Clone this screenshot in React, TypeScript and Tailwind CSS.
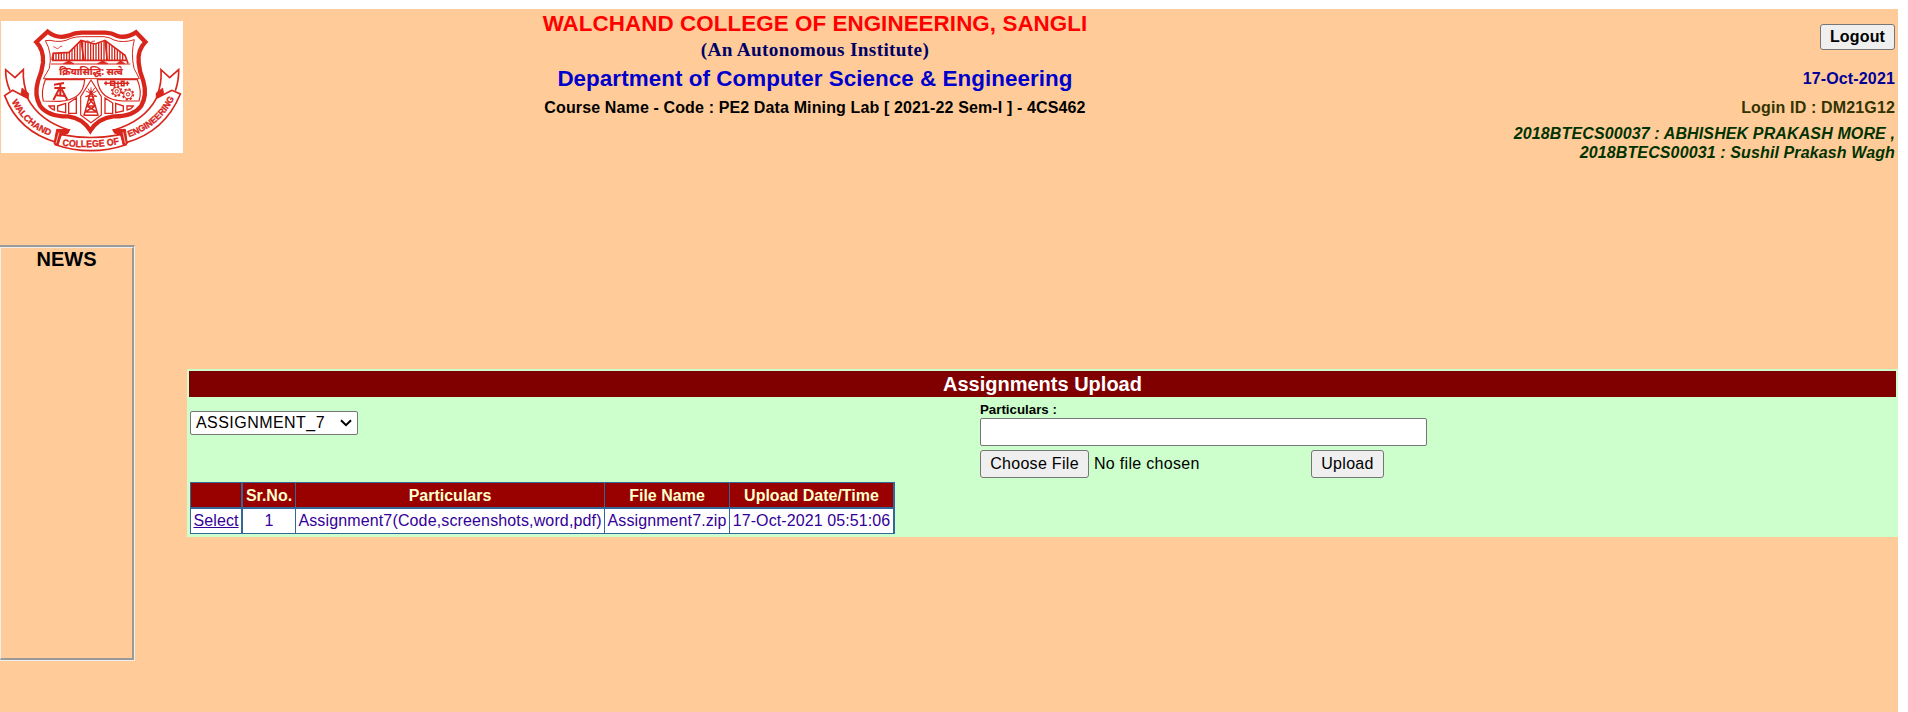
import React from "react";

const sans = "font-['Liberation_Sans',Arial,sans-serif]";

function Logo() {
  return (
    <svg viewBox="3 63 546 396" className="block h-[132px] w-[182px] bg-white" fill="none" stroke="#d9261c">
      {/* ribbon tails */}
      <path d="M30 272 Q16 240 17 209 L45 233 L70 209 Q68 252 84 290 M526 272 Q537 240 536 209 L509 233 L483 209 Q486 252 470 290" strokeWidth="5" />
      <path d="M66 264 L86 280 L85 298 L62 284 Z M488 264 L468 280 L469 298 L492 284 Z" fill="#d9261c" strokeWidth="2" />
      {/* shield */}
      <path
        d="M143 95 Q172 118 205 107 Q225 98 245 98 L316 98 Q336 99 350 107 Q378 117 408 97 L436 126 Q412 150 416 188 Q418 215 430 243 Q442 285 424 317 Q400 350 340 349 Q295 354 271 392 Q247 354 205 349 Q144 350 120 317 Q102 285 114 243 Q126 215 129 188 Q132 150 109 126 Z"
        strokeWidth="13"
        fill="#fff"
      />
      <path
        d="M150 121 Q185 130 212 115 Q228 110 245 110 L312 110 Q330 112 342 120 Q368 130 403 119 Q392 160 402 205 L418 236 H130 L148 205 Q158 160 136 122 Z M153 192 H391"
        strokeWidth="3"
      />
      {/* bridge and birds */}
      <path d="M156 180 L160 160 L207 157 L243 121 L285 132 L315 121 L375 166 L384 190 M156 181 H378 M243 121 L252 182 M315 121 L322 182" strokeWidth="5" />
      <path d="M160 158V182M168 158V182M176 158V182M184 158V182M192 158V182M200 158V182M208 155V182M216 148V182M224 141V182M232 133V182M240 126V182M248 124V182M256 126V182M264 128V182M272 130V182M280 132V182M288 132V182M296 129V182M304 127V182M312 124V182M320 126V182M328 132V182M336 138V182M344 144V182M352 150V182M360 156V182M368 162V182" strokeWidth="4" />
      <path d="M190 191 L207 182 L222 191 Z M292 191 L308 182 L324 191 Z M350 191 L362 182 L375 191Z" strokeWidth="2" fill="#d9261c" />
      <path d="M160 140 Q168 143 173 147 Q178 139 187 138 M260 122 Q267 123 271 128 Q276 123 285 123" strokeWidth="2.5" />
      <text x="273" y="226" textAnchor="middle" textLength="190" lengthAdjust="spacingAndGlyphs" fontSize="30" stroke="#d9261c" strokeWidth="0.6" fill="#d9261c" className="font-['Noto_Sans','Noto_Sans_Devanagari',sans-serif] font-bold">
        क्रियासिद्धि: सत्वे
      </text>
      {/* quadrants */}
      <path d="M136 239 H254 Q250 300 178 304 L130 303 Q122 275 136 239 Z M292 239 H412 Q427 275 417 303 L368 303 Q298 300 292 239 Z" strokeWidth="3.5" />
      {/* theodolite */}
      <path d="M162 254 L192 249 M163 264 H196 M181 252 V270 M177 268 L160 300 M185 268 L202 300 M181 270 V290 M170 286 L194 288" strokeWidth="6" />
      {/* circuit and gears */}
      <path d="M312 250 H388 M318 244 V256 M332 244 H344 V256 H332 Z M354 244 V257 M364 244 H372 V257 H364 Z M382 244 V257" strokeWidth="4.5" />
      <circle cx="350" cy="274" r="14.5" strokeWidth="5" strokeDasharray="6 5.4" />
      <circle cx="350" cy="274" r="12" strokeWidth="3" />
      <circle cx="350" cy="274" r="5" strokeWidth="3" />
      <circle cx="384" cy="283" r="16" strokeWidth="5" strokeDasharray="6.5 6" />
      <circle cx="384" cy="283" r="13" strokeWidth="3" />
      <circle cx="384" cy="283" r="5" strokeWidth="3" />
      {/* side windows */}
      <path d="M147 318 H163 V330 Q154 328 147 318 Z M173 318 L197 310 V338 L173 333 Z M206 309 L229 294 V340 H206 Z M315 294 L338 309 V340 H315 Z M347 310 L370 318 V333 L347 338 Z M381 318 H400 Q394 328 381 330 Z" strokeWidth="4" />
      {/* tower */}
      <path d="M273 240 L304 290 V345 L273 368 L242 345 V290 Z" strokeWidth="3.5" />
      <path d="M273 272 L252 346 M273 272 L294 346 M267 298 H280 M261 318 H286 M255 336 H291 M268 298 L286 318 L255 336 M279 298 L261 318 L291 336 M250 346 H296" strokeWidth="4.5" />
      <path d="M273 262 V284 M256 289 H291 M258 273 L290 289 M290 273 L257 291 M264 266 L282 296 M284 264 L265 294" strokeWidth="3" />
      {/* lettered ribbon */}
      <path d="M38 271 L83 295 Q118 362 207 390 L172 428 Q55 395 14 287 Z M516 271 L469 295 Q434 362 342 390 L378 428 Q495 395 541 282 Z" strokeWidth="5" fill="#fff" />
      <path d="M184 404 Q272 421 362 404 L378 434 Q272 470 166 434 Z" strokeWidth="5" fill="#fff" />
      <path d="M170 388 L209 389 L204 400 L184 404 L174 437 L162 431 Z M376 388 L338 389 L344 400 L362 404 L370 437 L382 431 Z" strokeWidth="3" fill="#d9261c" />
      <path d="M177 397 L168 430 M369 397 L376 430" strokeWidth="2" stroke="#fff" />
      <path id="ribbon-left" d="M35 304 Q72 380 154 409" stroke="none" />
      <path id="ribbon-mid" d="M187 437 Q272 448 362 432" stroke="none" />
      <path id="ribbon-right" d="M387 412 Q485 377 527 287" stroke="none" />
      <g fill="#d9261c" stroke="#d9261c" strokeWidth="1" className="font-['Liberation_Sans',Arial,sans-serif] font-bold">
        <text fontSize="27"><textPath href="#ribbon-left" textLength="158" lengthAdjust="spacingAndGlyphs">WALCHAND</textPath></text>
        <text fontSize="29"><textPath href="#ribbon-mid" textLength="172" lengthAdjust="spacingAndGlyphs">COLLEGE OF</textPath></text>
        <text fontSize="27"><textPath href="#ribbon-right" textLength="184" lengthAdjust="spacingAndGlyphs">ENGINEERING</textPath></text>
      </g>
    </svg>
  );
}

function Header() {
  return (
    <header className="flex h-[236px] font-bold">
      <div className="w-[187px] pt-3 pl-px">
        <Logo />
      </div>
      <div className="flex w-[1256px] flex-col items-center pt-0.5 whitespace-nowrap">
        <h1 className="text-[22.4px] leading-[26px] tracking-[0.06px] text-[#ff0000]">WALCHAND COLLEGE OF ENGINEERING, SANGLI</h1>
        <p className="font-['Liberation_Serif','Times_New_Roman',serif] text-[19.2px] leading-[25px] tracking-[0.35px] text-[#000066]">(An Autonomous Institute)</p>
        <h2 className="text-[22.4px] leading-[34px] tracking-[0.06px] text-[#0000cc]">Department of Computer Science &amp; Engineering</h2>
        <p className="text-base leading-[24px] tracking-[0.13px] text-black">Course Name - Code : PE2 Data Mining Lab [ 2021-22 Sem-I ] - 4CS462</p>
      </div>
      <div className="flex flex-1 flex-col items-end pt-[15px] pr-[3px] whitespace-nowrap">
        <button className="h-[26px] w-[75px] rounded-[3px] border border-[#767676] bg-[#efefef] text-base leading-6 tracking-[0.15px] text-black">Logout</button>
        <p className="mt-[14px] text-base leading-[29px] tracking-[0.15px] text-[#000099]">17-Oct-2021</p>
        <p className="text-base leading-[29px] tracking-[0.15px] text-[#333300]">Login ID : DM21G12</p>
        <p className="mt-0.5 text-right text-base leading-[19px] tracking-[0.12px] text-[#003300] italic">
          2018BTECS00037 : ABHISHEK PRAKASH MORE ,<br />
          2018BTECS00031 : Sushil Prakash Wagh
        </p>
      </div>
    </header>
  );
}

function News() {
  return (
    <aside className="h-[416px] w-[135px] border-t-2 border-r border-b border-t-[#9a9a9a] border-r-[#eeeeee] border-b-[#eeeeee]">
      <div className="h-full border-t border-r-2 border-b-2 border-l border-t-[#eeeeee] border-r-[#9a9a9a] border-b-[#9a9a9a] border-l-[#eeeeee]">
        <h3 className="text-center text-[20px] leading-[22px] font-bold text-black">NEWS</h3>
      </div>
    </aside>
  );
}

function UploadTable() {
  return (
    <div className="grid w-[705px] grid-cols-[51px_54px_309px_125px_165px] grid-rows-[26px_24px] border-l border-t border-b border-[#336699] text-base whitespace-nowrap">
      <div className="contents text-center leading-[22px] font-bold text-[#ffffcc]">
        <div className="border-r border-b-2 border-[#336699] bg-[#990000]" />
        <div className="border-r border-b-2 border-l border-[#336699] bg-[#990000] pt-0.5">Sr.No.</div>
        <div className="border-r border-b-2 border-[#336699] bg-[#990000] pt-0.5">Particulars</div>
        <div className="border-r border-b-2 border-[#336699] bg-[#990000] pt-0.5">File Name</div>
        <div className="border-r-2 border-b-2 border-[#336699] bg-[#990000] pt-0.5">Upload Date/Time</div>
      </div>
      <div className="contents text-center leading-6 text-[#330099]">
        <div className="border-r border-[#336699] bg-white"><a href="#select" className="tracking-[0.1px] underline">Select</a></div>
        <div className="border-r border-l border-[#336699] bg-white">1</div>
        <div className="border-r border-[#336699] bg-white tracking-[0.14px]">Assignment7(Code,screenshots,word,pdf)</div>
        <div className="border-r border-[#336699] bg-white tracking-[0.1px]">Assignment7.zip</div>
        <div className="border-r-2 border-[#336699] bg-white tracking-[0.1px]">17-Oct-2021 05:51:06</div>
      </div>
    </div>
  );
}

function Assignments() {
  return (
    <section className="mt-[124px] ml-[52px] h-[168px] flex-1 bg-[#ccffcc] p-0.5">
      <h2 className="h-[26px] bg-[#800000] text-center text-[20px] leading-[26px] font-bold text-white">Assignments Upload</h2>
      <div className="flex h-[85px] pl-px">
        <div className="w-[790px] pt-[14px]">
          <div className="flex h-6 w-[168px] items-center justify-between rounded-[2px] border border-[#767676] bg-white pr-[5px] pl-[5px] text-base leading-[22px] text-black">
            <span className="tracking-[0.45px]">ASSIGNMENT_7</span>
            <svg viewBox="0 0 12 8" className="h-2 w-3" fill="none" stroke="#000" strokeWidth="2">
              <path d="M1 1.2 L6 6.2 L11 1.2" />
            </svg>
          </div>
        </div>
        <div className="pt-[5px] text-base text-black">
          <label className="block h-4 text-[13.3px] leading-4 font-bold">Particulars :</label>
          <input className="block h-7 w-[447px] rounded-[2px] border border-[#767676] bg-white" />
          <div className="mt-1 flex h-7 items-center leading-[26px]">
            <button className="h-7 w-[109px] rounded-[3px] border border-[#767676] bg-[#efefef] tracking-[0.3px]">Choose File</button>
            <span className="w-[222px] pl-[5px] tracking-[0.3px]">No file chosen</span>
            <button className="h-7 w-[73px] rounded-[3px] border border-[#767676] bg-[#efefef] tracking-[0.3px]">Upload</button>
          </div>
        </div>
      </div>
      <div className="pl-px">
        <UploadTable />
      </div>
    </section>
  );
}

export default function App() {
  return (
    <div className={`h-[712px] overflow-hidden bg-white pt-[9px] pr-[10px] ${sans}`}>
      <div className="h-full bg-[#ffcc99]">
        <Header />
        <main className="flex items-start">
          <News />
          <Assignments />
        </main>
      </div>
    </div>
  );
}
